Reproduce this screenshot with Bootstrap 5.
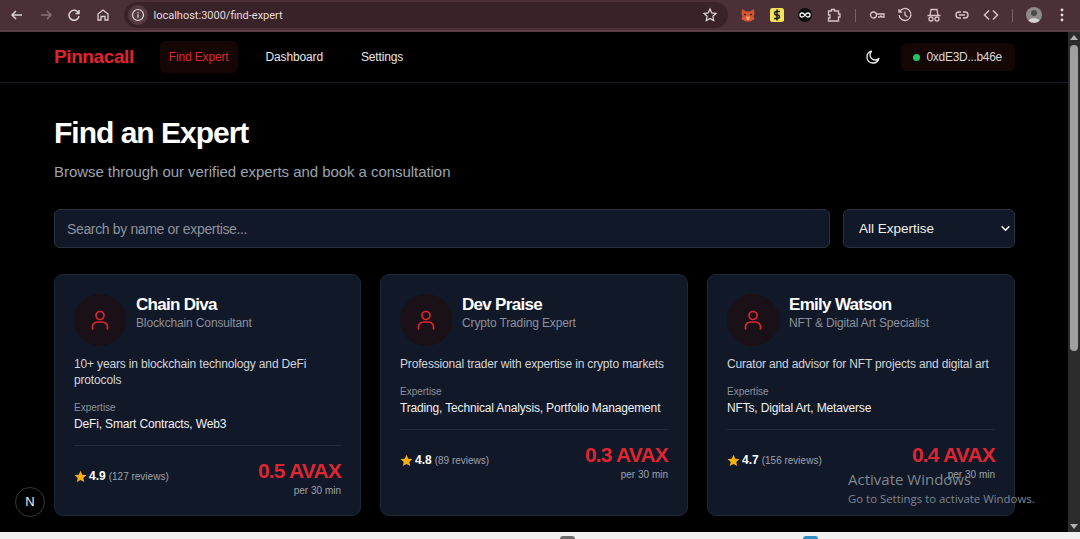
<!DOCTYPE html>
<html lang="en">
<head>
    <meta charset="UTF-8">
    <title>Pinnacall - Find Expert</title>
    <link href="https://cdn.jsdelivr.net/npm/bootstrap@5.3.0/dist/css/bootstrap.min.css" rel="stylesheet">
    <style>
        html, body { height: 539px; overflow: hidden; }
        body { background: #000; font-family: "Liberation Sans", Arial, sans-serif; position: relative; }
        .chrome-bar { height: 32px; background: #4c3037; color: #d9cfd2; padding: 0 9px 0 8px; border-bottom: 2px solid #5a3e45; }
        .chrome-btn { width: 18px; height: 18px; flex: none; }
        .chrome-btn + .chrome-btn { margin-left: 10.5px; }
        .url-pill { width: 606px; height: 26px; background: #3a2229; border-radius: 13px; margin-left: 12px; padding: 0 10px 0 4px; font: 11px "Roboto", sans-serif; color: #e4dcde; }
        .url-info { width: 20px; height: 20px; border-radius: 50%; background: #553a41; margin-right: 6px; }
        .ext-first { margin-left: 11px; }
        .ext-sep { width: 1px; height: 13px; background: #77606a; flex: none; margin: 0 12px; }
        .page-row { height: 500px; }
        .page-main { width: 1068px; background: #000; }
        .scroll-track { width: 12px; background: #2c2c2c; padding: 3px 2px; }
        .scroll-thumb { height: 306px; background: #a0a0a0; border-radius: 4px; margin-top: 5px; }
        .scroll-up { width: 0; height: 0; margin: 0 auto; border: 4px solid transparent; border-top: 0; border-bottom: 5px solid #b0b0b0; }
        .scroll-down { width: 0; height: 0; margin: auto auto 0; border: 4px solid transparent; border-bottom: 0; border-top: 5px solid #b0b0b0; }
        .top-nav { height: 51px; border-bottom: 1px solid #161c27; padding: 0 53px 0 54px; }
        .brand-name { color: #e0242f; font-size: 19px; font-weight: 700; letter-spacing: -.4px; margin-right: 26px; }
        .nav-item-link { font-size: 12px; color: #e6e6e6; letter-spacing: -.15px; margin-right: 38px; }
        .nav-item-link.is-active { color: #d62a32; background: #150505; border-radius: 5px; padding: 7px 9px; margin-right: 28px; }
        .wallet-pill { background: #150606; color: #d8d8d8; border-radius: 6px; font-size: 12px; height: 28px; padding: 0 13px 0 12px; margin-left: 20px; letter-spacing: -.3px; }
        .wallet-dot { width: 7px; height: 7px; background: #22c55e; border-radius: 50%; margin-right: 7px; }
        .page-body { padding: 32px 53px 0 54px; }
        .page-title { font-size: 30px; font-weight: 700; color: #fff; letter-spacing: -1px; line-height: 36px; margin: 0 0 9px; }
        .page-sub { font-size: 15px; color: #9ca3af; line-height: 24px; letter-spacing: -.05px; margin: 0 0 25px; }
        .filter-row { gap: 13px; margin-bottom: 26px; }
        .search-box { flex: 1; height: 39px; background: #111827; border: 1px solid #2a3240; border-radius: 6px; color: #fff; font-size: 14px; letter-spacing: -.35px; padding: 0 12px; }
        .search-box:focus { background: #111827; color: #fff; border-color: #2a3240; box-shadow: none; }
        .search-box::placeholder { color: #8b929e; opacity: 1; }
        .expertise-select { width: 172px; flex: none; height: 39px; background-color: #111827; border: 1px solid #2a3240; border-radius: 6px; color: #f1f1f1; font-size: 13.5px; padding: 2px 15px 0; box-shadow: none; background-image: url("data:image/svg+xml,%3csvg xmlns='http://www.w3.org/2000/svg' viewBox='0 0 16 16'%3e%3cpath fill='none' stroke='%23fff' stroke-linecap='round' stroke-linejoin='round' stroke-width='2.6' d='m2 5 6 6 6-6'/%3e%3c/svg%3e"); background-size: 9px 9px; background-position: right 4px center; }
        .expert-grid { display: grid; grid-template-columns: 307px 308px 308px; gap: 19px; }
        .expert-card { height: 242px; background: #111827; border: 1px solid #1f2735; border-radius: 9px; padding: 19px; color: #fff; }
        .avatar-ring { width: 52px; height: 52px; border-radius: 50%; background: #1a1018; margin-right: 10px; flex: none; }
        .expert-name { font-size: 17px; font-weight: 700; line-height: 20px; letter-spacing: -.7px; margin: 1px 0 0; }
        .expert-role { font-size: 12px; color: #8b929e; line-height: 16px; letter-spacing: -.14px; }
        .expert-bio { font-size: 12px; line-height: 16px; color: #d1d5db; letter-spacing: -.16px; margin: 10px 0 13px; }
        .label-small { font-size: 10px; color: #8b929e; line-height: 14px; margin-bottom: 1px; }
        .expert-tags { font-size: 12px; line-height: 16px; color: #f0f0f0; letter-spacing: -.16px; padding-bottom: 13px; border-bottom: 1px solid #232b39; }
        .card-bottom { margin-top: 13px; }
        .rating-box { padding-bottom: 5px; }
        .rating-num { font-size: 12px; font-weight: 700; margin: 0 3px 0 2px; }
        .rating-count { font-size: 10px; color: #9ca3af; }
        .price-big { font-size: 21px; font-weight: 700; color: #dc2632; line-height: 24px; letter-spacing: -.8px; text-align: right; }
        .price-per { font-size: 10px; color: #9ca3af; line-height: 15px; text-align: right; }
        .next-badge { position: absolute; left: 15px; bottom: 22px; width: 30px; height: 30px; border-radius: 50%; background: #000; border: 1px solid #3a3a3a; color: #eee; font-size: 13px; }
        .win-mark { position: absolute; left: 848px; top: 471px; color: #7f8791; font-family: "Open Sans", sans-serif; pointer-events: none; }
        .win-mark-title { font-size: 15px; line-height: 17px; }
        .win-mark-sub { font-size: 11.400px; line-height: 15px; margin-top: 3px; }
        .bottom-strip { height: 7px; background: #f1f1f1; }
        .task-dome { width: 15px; height: 3px; border-radius: 8px 8px 0 0; flex: none; }
        .dome-grey { background: #6d6d6d; margin-left: 560px; }
        .dome-blue { background: #2f8fc4; margin-left: 228px; }
    </style>
</head>
<body>

<!-- Browser toolbar -->
<div class="chrome-bar d-flex align-items-center">
    <svg class="chrome-btn" viewBox="0 0 18 18" fill="none" stroke="#d9cfd2" stroke-width="1.500"><path d="M14 9H4M8 5 4 9l4 4"/></svg>
    <svg class="chrome-btn" viewBox="0 0 18 18" fill="none" stroke="#85707a" stroke-width="1.500"><path d="M4 9h10M10 5l4 4-4 4"/></svg>
    <svg class="chrome-btn" viewBox="0 0 18 18" fill="none" stroke="#d9cfd2" stroke-width="1.500"><path d="M13.500 7A5 5 0 1 0 14 10M14 4v3.500h-3.500"/></svg>
    <svg class="chrome-btn" viewBox="0 0 18 18" fill="none" stroke="#d9cfd2" stroke-width="1.300"><path d="M4 8 9 4l5 4v6h-3v-3.500H7V14H4z"/></svg>
    <div class="url-pill d-flex align-items-center">
        <span class="url-info d-flex align-items-center justify-content-center">
            <svg width="14" height="14" viewBox="0 0 14 14" fill="none" stroke="#e4dcde" stroke-width="1.200"><circle cx="7" cy="7" r="5.500"/><path d="M7 6.200v3.500M7 4v1.200"/></svg>
        </span>
        <span>localhost:3000/find-expert</span>
        <svg class="ms-auto" width="16" height="16" viewBox="0 0 16 16" fill="none" stroke="#e4dcde" stroke-width="1.200"><path d="m8 2 1.800 3.900 4.200.5-3.100 2.900.8 4.200L8 11.400 4.300 13.500l.8-4.200L2 6.400l4.200-.5z"/></svg>
    </div>
    <svg class="chrome-btn ext-first" viewBox="0 0 18 18"><path fill="#d9552f" d="M3 3l4 2.500h4L15 3l.5 5-1 2 1 3-4 2.500h-5L2.500 13l1-3-1-2z"/><path fill="#f2a27c" d="M7 10.500h4l-.8 3.500H7.800z"/><circle cx="6" cy="8.500" r="1" fill="#3a2229"/><circle cx="12" cy="8.500" r="1" fill="#3a2229"/></svg>
    <svg class="chrome-btn" viewBox="0 0 18 18"><rect x="2" y="2" width="14" height="14" rx="2.500" fill="#f3e25a"/><path fill="none" stroke="#222" stroke-width="1.600" d="M12 5.500H8a1.800 1.800 0 0 0 0 3.500h2a1.800 1.800 0 0 1 0 3.500H6M9 3.500v11"/></svg>
    <svg class="chrome-btn" viewBox="0 0 18 18"><circle cx="9" cy="9" r="7" fill="#0d0d0d"/><path fill="none" stroke="#eee" stroke-width="1.300" d="M9 9c-1-1.500-2-2-3-2a2 2 0 0 0 0 4c1 0 2-.5 3-2s2-2 3-2a2 2 0 0 1 0 4c-1 0-2-.5-3-2z"/></svg>
    <svg class="chrome-btn" viewBox="0 0 18 18" fill="none" stroke="#d8c4c9" stroke-width="1.300"><path d="M3.500 5h3V3.500h3V5h4v3H15v3h-1.500v4h-10v-3H5V9H3.500z"/></svg>
    <span class="ext-sep"></span>
    <svg class="chrome-btn" viewBox="0 0 18 18" fill="none" stroke="#d8c4c9" stroke-width="1.300"><circle cx="5.500" cy="9" r="3"/><path d="M8.500 8H16v3h-2l-1-1-1 1h-2"/></svg>
    <svg class="chrome-btn" viewBox="0 0 18 18" fill="none" stroke="#d8c4c9" stroke-width="1.300"><path d="M3.500 6A6 6 0 1 1 3 9M3 3v3.200h3.200M9 5.500V9l2.500 2"/></svg>
    <svg class="chrome-btn" viewBox="0 0 18 18" fill="none" stroke="#d8c4c9" stroke-width="1.300"><path d="M2.500 9.500h13M5 9.500l1-6h6l1 6"/><circle cx="6" cy="13" r="2"/><circle cx="12" cy="13" r="2"/></svg>
    <svg class="chrome-btn" viewBox="0 0 18 18" fill="none" stroke="#d8c4c9" stroke-width="1.400"><path d="M8 6H6a3 3 0 0 0 0 6h2M10 6h2a3 3 0 0 1 0 6h-2M6 9h6"/></svg>
    <svg class="chrome-btn" viewBox="0 0 18 18" fill="none" stroke="#d8c4c9" stroke-width="1.500"><path d="M7 4.500 2.500 9 7 13.500M11 4.500 15.500 9 11 13.500"/></svg>
    <span class="ext-sep"></span>
    <svg class="chrome-btn" viewBox="0 0 18 18"><circle cx="9" cy="9" r="8" fill="#8d8a88"/><circle cx="9" cy="7" r="3" fill="#4e4a4b"/><path fill="#d7d3cf" d="M3.500 14.500C5 11 13 11 14.500 14.500 12 17.500 6 17.500 3.500 14.500z"/></svg>
    <svg class="chrome-btn" viewBox="0 0 18 18" fill="#e4dcde"><circle cx="9" cy="4" r="1.400"/><circle cx="9" cy="9" r="1.400"/><circle cx="9" cy="14" r="1.400"/></svg>
</div>

<div class="page-row d-flex">
    <div class="page-main">
        <!-- Navbar -->
        <nav class="top-nav d-flex align-items-center">
            <span class="brand-name">Pinnacall</span>
            <a class="nav-item-link is-active text-decoration-none" href="#">Find Expert</a>
            <a class="nav-item-link text-decoration-none" href="#">Dashboard</a>
            <a class="nav-item-link text-decoration-none" href="#">Settings</a>
            <svg class="ms-auto" width="16" height="16" viewBox="0 0 16 16" fill="none" stroke="#f2f2f2" stroke-width="1.300" stroke-linejoin="round"><path d="M13.800 9.500A6 6 0 1 1 6.500 2.200 5 5 0 0 0 13.800 9.500z"/></svg>
            <span class="wallet-pill d-flex align-items-center"><span class="wallet-dot"></span>0xdE3D...b46e</span>
        </nav>

        <div class="page-body">
            <h1 class="page-title">Find an Expert</h1>
            <p class="page-sub">Browse through our verified experts and book a consultation</p>

            <div class="filter-row d-flex">
                <input type="text" class="form-control search-box" placeholder="Search by name or expertise...">
                <select class="form-select expertise-select">
                    <option>All Expertise</option>
                </select>
            </div>

            <div class="expert-grid">
                <div class="expert-card d-flex flex-column">
                    <div class="d-flex align-items-start">
                        <div class="avatar-ring d-flex align-items-center justify-content-center">
                            <svg width="24" height="24" viewBox="0 0 24 24" fill="none" stroke="#dc2632" stroke-width="1.700" stroke-linecap="round"><circle cx="12" cy="7.500" r="4"/><path d="M4.500 21v-2a5 5 0 0 1 5-5h5a5 5 0 0 1 5 5v2"/></svg>
                        </div>
                        <div>
                            <h5 class="expert-name">Chain Diva</h5>
                            <div class="expert-role">Blockchain Consultant</div>
                        </div>
                    </div>
                    <p class="expert-bio">10+ years in blockchain technology and DeFi protocols</p>
                    <div class="label-small">Expertise</div>
                    <div class="expert-tags">DeFi, Smart Contracts, Web3</div>
                    <div class="card-bottom d-flex justify-content-between align-items-center">
                        <div class="rating-box d-flex align-items-center">
                            <svg width="13" height="13" viewBox="0 0 16 16" fill="#f5ae14"><path d="m8 1 2.200 4.700 5.100.6-3.800 3.500 1 5.100L8 12.400 3.500 14.900l1-5.100L.7 6.300l5.100-.6z"/></svg>
                            <span class="rating-num">4.9</span><span class="rating-count">(127 reviews)</span>
                        </div>
                        <div>
                            <div class="price-big">0.5 AVAX</div>
                            <div class="price-per">per 30 min</div>
                        </div>
                    </div>
                </div>

                <div class="expert-card d-flex flex-column">
                    <div class="d-flex align-items-start">
                        <div class="avatar-ring d-flex align-items-center justify-content-center">
                            <svg width="24" height="24" viewBox="0 0 24 24" fill="none" stroke="#dc2632" stroke-width="1.700" stroke-linecap="round"><circle cx="12" cy="7.500" r="4"/><path d="M4.500 21v-2a5 5 0 0 1 5-5h5a5 5 0 0 1 5 5v2"/></svg>
                        </div>
                        <div>
                            <h5 class="expert-name">Dev Praise</h5>
                            <div class="expert-role">Crypto Trading Expert</div>
                        </div>
                    </div>
                    <p class="expert-bio">Professional trader with expertise in crypto markets</p>
                    <div class="label-small">Expertise</div>
                    <div class="expert-tags">Trading, Technical Analysis, Portfolio Management</div>
                    <div class="card-bottom d-flex justify-content-between align-items-center">
                        <div class="rating-box d-flex align-items-center">
                            <svg width="13" height="13" viewBox="0 0 16 16" fill="#f5ae14"><path d="m8 1 2.200 4.700 5.100.6-3.800 3.500 1 5.100L8 12.400 3.500 14.900l1-5.100L.7 6.300l5.100-.6z"/></svg>
                            <span class="rating-num">4.8</span><span class="rating-count">(89 reviews)</span>
                        </div>
                        <div>
                            <div class="price-big">0.3 AVAX</div>
                            <div class="price-per">per 30 min</div>
                        </div>
                    </div>
                </div>

                <div class="expert-card d-flex flex-column">
                    <div class="d-flex align-items-start">
                        <div class="avatar-ring d-flex align-items-center justify-content-center">
                            <svg width="24" height="24" viewBox="0 0 24 24" fill="none" stroke="#dc2632" stroke-width="1.700" stroke-linecap="round"><circle cx="12" cy="7.500" r="4"/><path d="M4.500 21v-2a5 5 0 0 1 5-5h5a5 5 0 0 1 5 5v2"/></svg>
                        </div>
                        <div>
                            <h5 class="expert-name">Emily Watson</h5>
                            <div class="expert-role">NFT &amp; Digital Art Specialist</div>
                        </div>
                    </div>
                    <p class="expert-bio">Curator and advisor for NFT projects and digital art</p>
                    <div class="label-small">Expertise</div>
                    <div class="expert-tags">NFTs, Digital Art, Metaverse</div>
                    <div class="card-bottom d-flex justify-content-between align-items-center">
                        <div class="rating-box d-flex align-items-center">
                            <svg width="13" height="13" viewBox="0 0 16 16" fill="#f5ae14"><path d="m8 1 2.200 4.700 5.100.6-3.800 3.500 1 5.100L8 12.400 3.500 14.900l1-5.100L.7 6.300l5.100-.6z"/></svg>
                            <span class="rating-num">4.7</span><span class="rating-count">(156 reviews)</span>
                        </div>
                        <div>
                            <div class="price-big">0.4 AVAX</div>
                            <div class="price-per">per 30 min</div>
                        </div>
                    </div>
                </div>
            </div>
        </div>
    </div>
    <div class="scroll-track d-flex flex-column">
        <div class="scroll-up"></div>
        <div class="scroll-thumb"></div>
        <div class="scroll-down"></div>
    </div>
</div>
<div class="bottom-strip d-flex align-items-end">
    <span class="task-dome dome-grey"></span>
    <span class="task-dome dome-blue"></span>
</div>

<!-- Overlays -->
<div class="next-badge d-flex align-items-center justify-content-center">N</div>
<div class="win-mark">
    <div class="win-mark-title">Activate Windows</div>
    <div class="win-mark-sub">Go to Settings to activate Windows.</div>
</div>

<script src="https://cdn.jsdelivr.net/npm/bootstrap@5.3.0/dist/js/bootstrap.bundle.min.js"></script>
</body>
</html>
